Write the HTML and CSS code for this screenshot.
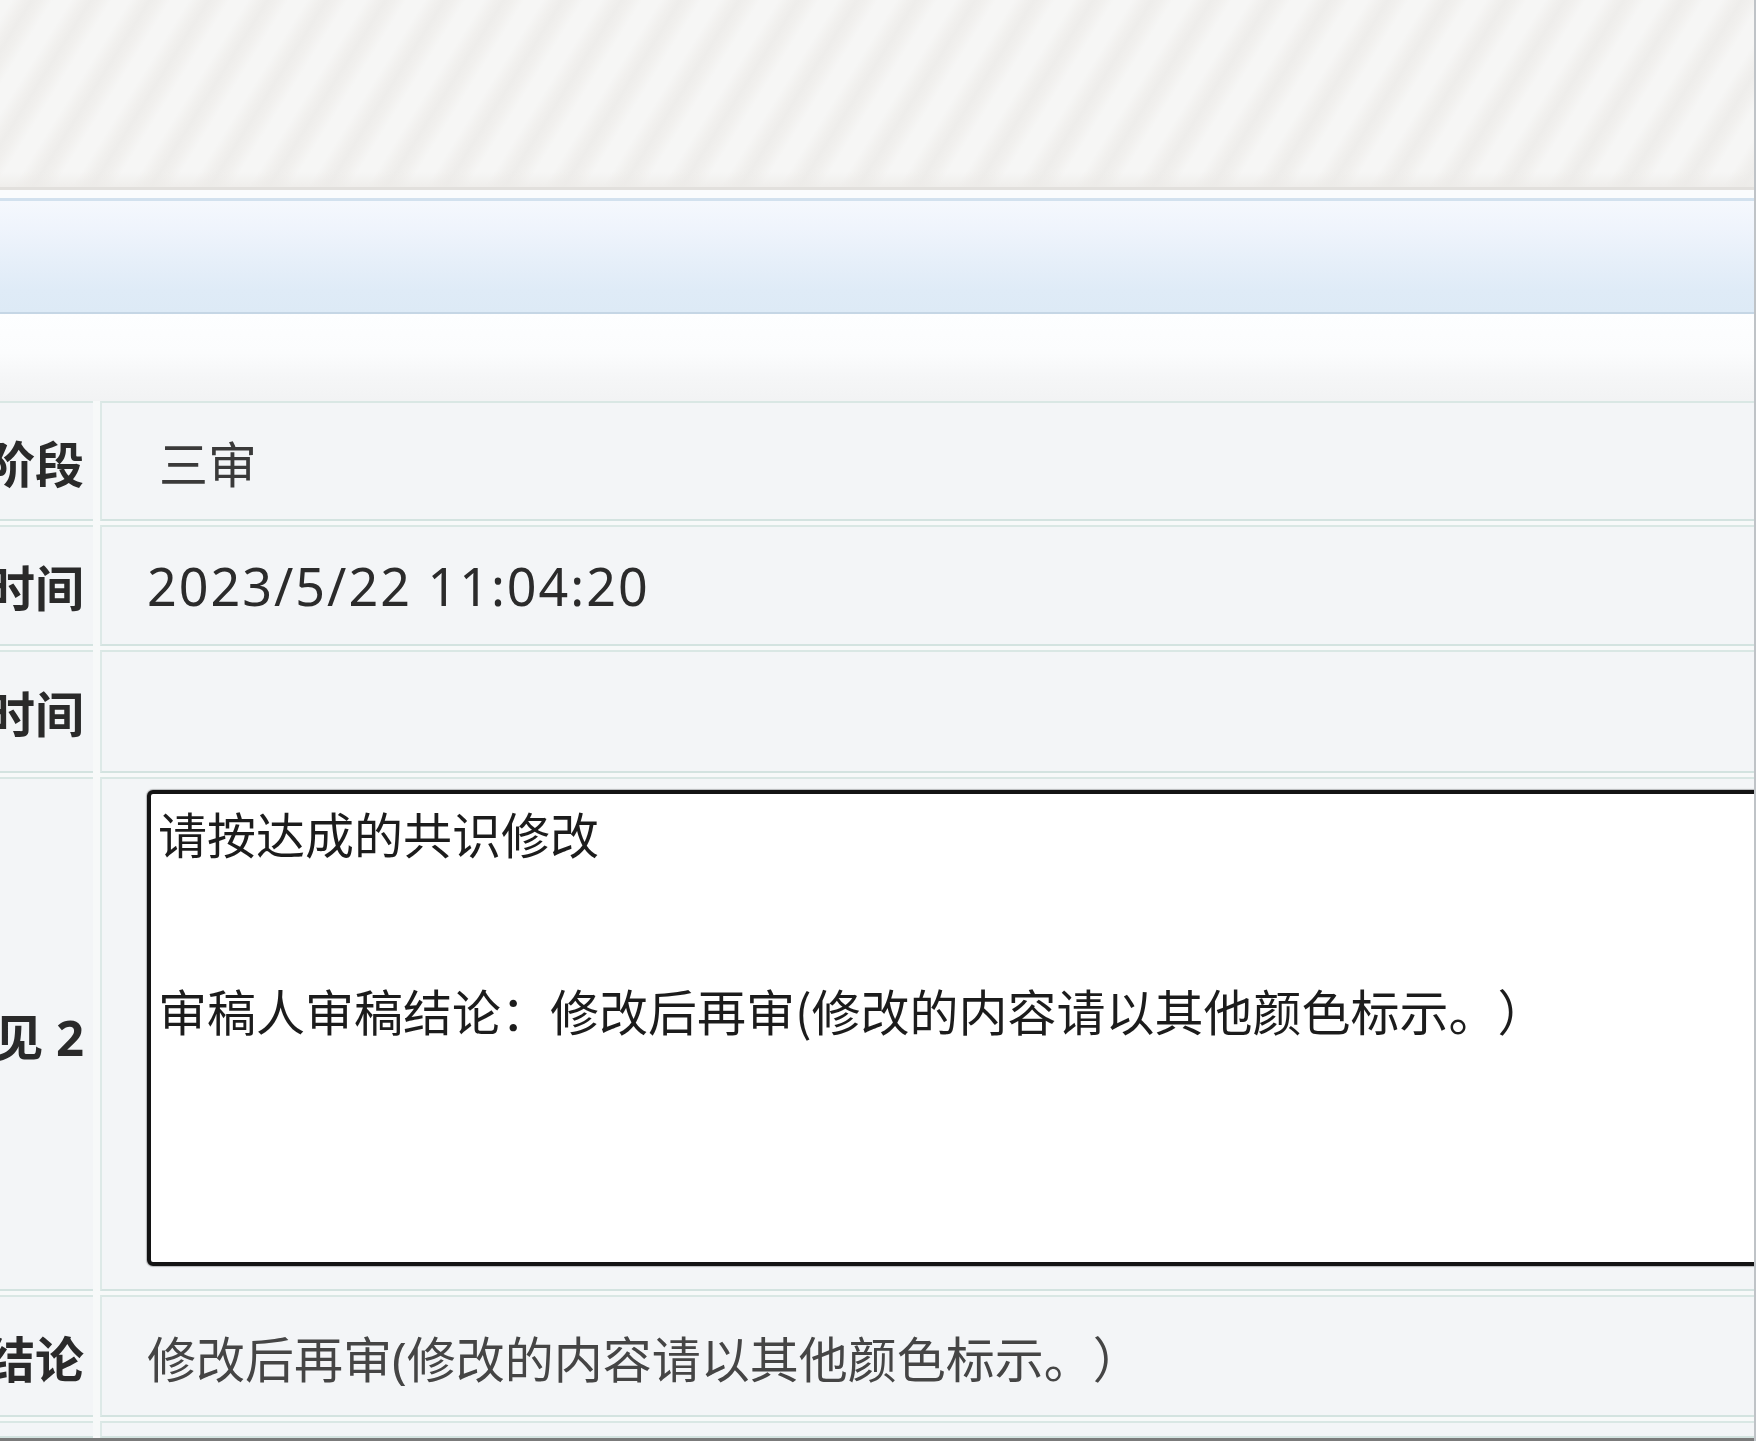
FILE: index.html
```html
<!DOCTYPE html>
<html lang="zh-CN">
<head>
<meta charset="utf-8">
<title>审稿信息</title>
<link rel="stylesheet" href="styles.css">
</head>
<body>
<div class="page">
  <div class="banner"></div>
  <div class="spacer"></div>
  <div class="titlebar"></div>
  <div class="toolbar"></div>
  <div class="form">
    <div class="label">审稿阶段</div>
    <div class="value stage">三审</div>

    <div class="label">开始时间</div>
    <div class="value date">2023/5/22 11:04:20</div>

    <div class="label">完成时间</div>
    <div class="value"></div>

    <div class="label">审稿意见 2</div>
    <div class="value opinion">
      <textarea class="memo" readonly>请按达成的共识修改


审稿人审稿结论：修改后再审(修改的内容请以其他颜色标示。）</textarea>
    </div>

    <div class="label">审稿结论</div>
    <div class="value result">修改后再审(修改的内容请以其他颜色标示。）</div>

    <div class="label"></div>
    <div class="value"></div>
  </div>
  <div class="edge"></div>
</div>
</body>
</html>
```

FILE: styles.css
```css
* {
  box-sizing: border-box;
}

html,
body {
  margin: 0;
  padding: 0;
}

body {
  width: 1756px;
  height: 1441px;
  overflow: hidden;
  background: #f3f5f7;
  font-family: "Noto Sans", "Noto Sans CJK SC", sans-serif;
}

.page {
  width: 1756px;
  height: 1441px;
  display: flex;
  flex-direction: column;
  border-right: 2px solid #bfc3c7;
  overflow: hidden;
}

.banner {
  flex: none;
  height: 190px;
  border-bottom: 3px solid #e2e0dd;
  background:
    linear-gradient(180deg, rgba(255,255,255,0) 0, rgba(255,255,255,0) 92%, rgba(236,234,231,0.7) 100%),
    repeating-linear-gradient(122deg,
      #f6f6f5 0px,
      #f6f6f5 10px,
      #f1f0ee 20px,
      #eeedeb 27px,
      #f1f0ee 35px,
      #f6f6f5 45px,
      #f6f6f5 50px);
}

.spacer {
  flex: none;
  height: 8px;
  background: #fafcfd;
}

.titlebar {
  flex: none;
  height: 116px;
  border-top: 3px solid #d2e1ee;
  border-bottom: 2px solid #c5d6e5;
  background: linear-gradient(180deg, #f5f8fd 0%, #eff4fc 25%, #e6eff9 55%, #dfebf7 80%, #ddeaf6 100%);
}

.toolbar {
  flex: none;
  height: 87px;
  background: linear-gradient(180deg, #fdfeff 0%, #fbfcfd 45%, #f5f6f7 75%, #f2f3f4 100%);
}

.form {
  flex: none;
  height: 1037px;
  width: 1954px;
  margin-left: -200px;
  display: grid;
  grid-template-columns: 293px 1654px;
  grid-template-rows: 120px 121px 123px 514px 122px 17px;
  column-gap: 7px;
  row-gap: 4px;
  background: #f7f9f9;
}

.label {
  display: flex;
  align-items: center;
  justify-content: flex-end;
  padding-right: 9px;
  background: #f3f5f7;
  border-top: 2px solid #d9e7e4;
  border-bottom: 2px solid #d3e3e0;
  font-size: 49px;
  font-weight: 700;
  color: #2a2a2a;
  white-space: nowrap;
  overflow: hidden;
}

.value {
  display: flex;
  align-items: center;
  padding-left: 45px;
  background: #f3f5f7;
  border-top: 2px solid #d9e7e4;
  border-bottom: 2px solid #d3e3e0;
  border-left: 2px solid #dde9e7;
  font-size: 49px;
  color: #2c2c2c;
  white-space: nowrap;
  overflow: hidden;
  text-spacing-trim: space-all;
}

.stage {
  padding-left: 57px;
  color: #3a3a3a;
}

.date {
  letter-spacing: 2px;
  font-size: 52px;
  color: #2b2b2b;
}

.opinion {
  align-items: flex-start;
  padding-top: 11px;
}

.memo {
  flex: none;
  display: block;
  margin: 0;
  width: 1700px;
  height: 476px;
  padding: 9px 7px;
  border: 4px solid #141414;
  border-radius: 6px;
  box-shadow: 0 0 1px 1px rgba(0, 0, 0, 0.25);
  background: #ffffff;
  color: #1c1c1c;
  font-family: "Noto Sans CJK SC", "Noto Sans", sans-serif;
  font-size: 49px;
  line-height: 59px;
  resize: none;
  overflow: hidden;
  outline: none;
  text-spacing-trim: space-all;
}

.result {
  color: #454545;
}

.edge {
  flex: none;
  height: 3px;
  background: #7b7b7b;
}
```
